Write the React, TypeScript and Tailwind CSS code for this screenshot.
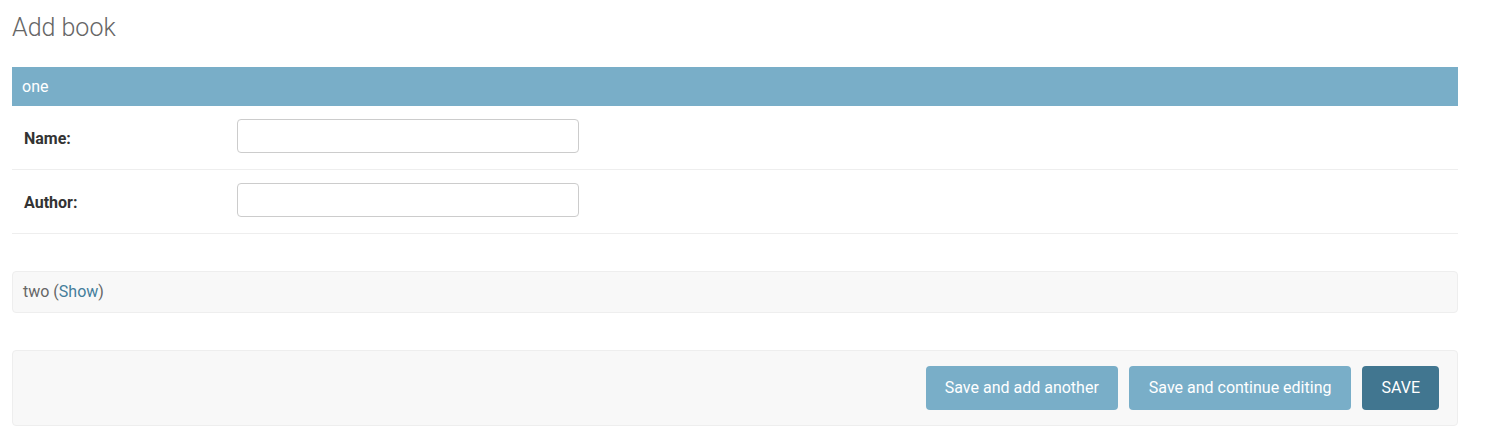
export default function App() {
  const fields = ["Name", "Author"];

  return (
    <div className="min-h-screen bg-white pl-3 pr-[30px] pt-[12px] font-['Roboto',sans-serif] text-[16px] text-[#333]">
      <h1 className="mb-[23px] text-[25px] font-light leading-[32px] text-[#666]">Add book</h1>

      {/* fieldset one */}
      <div>
        <h2 className="flex h-[39px] items-center bg-[#79aec8] px-[10px] text-[16px] font-normal text-white">
          one
        </h2>
        {fields.map((f) => (
          <div
            key={f}
            className="flex items-center border-b border-[#eee] pb-[16px] pl-3 pt-[13px]"
          >
            <label className="w-[213px] pt-[5px] text-[16px] font-bold text-[#333]">{f}:</label>
            <input
              type="text"
              className="h-[34px] w-[342px] rounded-[4px] border border-[#ccc] bg-white px-2 outline-none"
            />
          </div>
        ))}
      </div>

      {/* collapsed fieldset two */}
      <div className="mt-[37px] flex h-[42px] items-center rounded-[4px] border border-[#eee] bg-[#f8f8f8] px-[10px] text-[16px] text-[#666]">
        <span>
          two (<a className="text-[#447e9b]" href="#">Show</a>)
        </span>
      </div>

      {/* submit row */}
      <div className="mt-[37px] flex h-[76px] items-center justify-end gap-[11px] rounded-[4px] border border-[#eee] bg-[#f8f8f8] pr-[18px]">
        <button className="h-[44px] rounded-[4px] bg-[#79aec8] px-[19px] text-[16px] text-white">
          Save and add another
        </button>
        <button className="h-[44px] rounded-[4px] bg-[#79aec8] px-[20px] text-[16px] text-white">
          Save and continue editing
        </button>
        <button className="h-[44px] rounded-[4px] bg-[#417690] px-[19px] text-[16px] text-white">
          SAVE
        </button>
      </div>
    </div>
  );
}
